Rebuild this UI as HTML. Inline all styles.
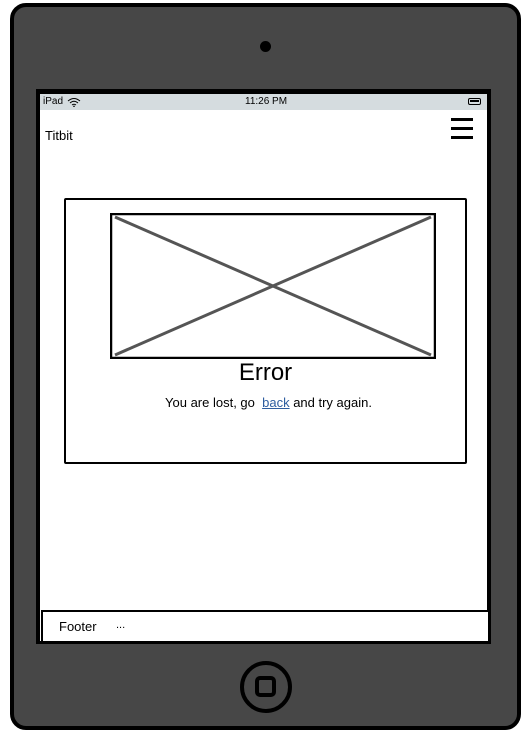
<!DOCTYPE html>
<html><head><meta charset="utf-8"><style>
*{margin:0;padding:0;box-sizing:border-box}
body{width:525px;height:736px;background:#fff;position:relative;overflow:hidden;font-family:"Liberation Sans",sans-serif}
.a{position:absolute}
</style></head><body>
<div class="a" style="left:10px;top:3px;width:511px;height:727px;background:#474747;border:4px solid #000;border-radius:16px"></div>
<div class="a" style="left:260px;top:41px;width:11px;height:11px;border-radius:50%;background:#000"></div>
<div class="a" style="left:36px;top:89px;width:455px;height:555px;background:#000"></div>
<div class="a" style="left:40px;top:94px;width:447px;height:547px;background:#fff"></div>
<div class="a" style="left:40px;top:94px;width:447px;height:16px;background:#d5dcdf;font-size:10px;color:#000">
 <span class="a" style="left:3px;top:2px">iPad</span>
 <svg class="a" style="left:27px;top:3px" width="14" height="10" viewBox="0 0 14 10"><path d="M1 4Q7 -1 13 4M3 6Q7 2.5 11 6M5 8Q7 6.5 9 8" stroke="#000" stroke-width="1" fill="none"/><circle cx="7" cy="9.3" r=".8"/></svg>
 <span class="a" style="left:205px;top:2px">11:26 PM</span>
 <div class="a" style="left:428px;top:4px;width:13px;height:7px;border:1.5px solid #000;border-radius:2px"><div style="margin:1px;height:2px;background:#000"></div></div>
</div>
<div class="a" style="left:45px;top:128px;font-size:13px">Titbit</div>
<div class="a" style="left:451px;top:118px;width:22px;height:2.5px;background:#000"></div>
<div class="a" style="left:451px;top:127px;width:22px;height:2.5px;background:#000"></div>
<div class="a" style="left:451px;top:136px;width:22px;height:2.5px;background:#000"></div>
<div class="a" style="left:64px;top:198px;width:403px;height:266px;border:2px solid #000;border-radius:2px"></div>
<svg class="a" style="left:110px;top:213px" width="326" height="146"><rect x="1" y="1" width="324" height="144" fill="#fff" stroke="#000" stroke-width="2.5"/><path d="M5 4L321 142M5 142L321 4" stroke="#555" stroke-width="3"/></svg>
<div class="a" style="left:64px;top:359px;width:403px;text-align:center;font-size:24px">Error</div>
<div class="a" style="left:67px;top:395px;width:403px;text-align:center;font-size:13px">You are lost, go &nbsp;<span style="color:#2f5ea0;text-decoration:underline">back</span> and try again.</div>
<div class="a" style="left:41px;top:610px;width:449px;height:33px;border:2px solid #000;background:#fff"></div>
<div class="a" style="left:59px;top:619px;font-size:13px">Footer</div>
<div class="a" style="left:116px;top:619px;font-size:11px">...</div>
<div class="a" style="left:240px;top:661px;width:52px;height:52px;border:4px solid #000;border-radius:50%"></div>
<div class="a" style="left:255px;top:676px;width:21px;height:21px;border:4px solid #000;border-radius:5px"></div>
</body></html>
